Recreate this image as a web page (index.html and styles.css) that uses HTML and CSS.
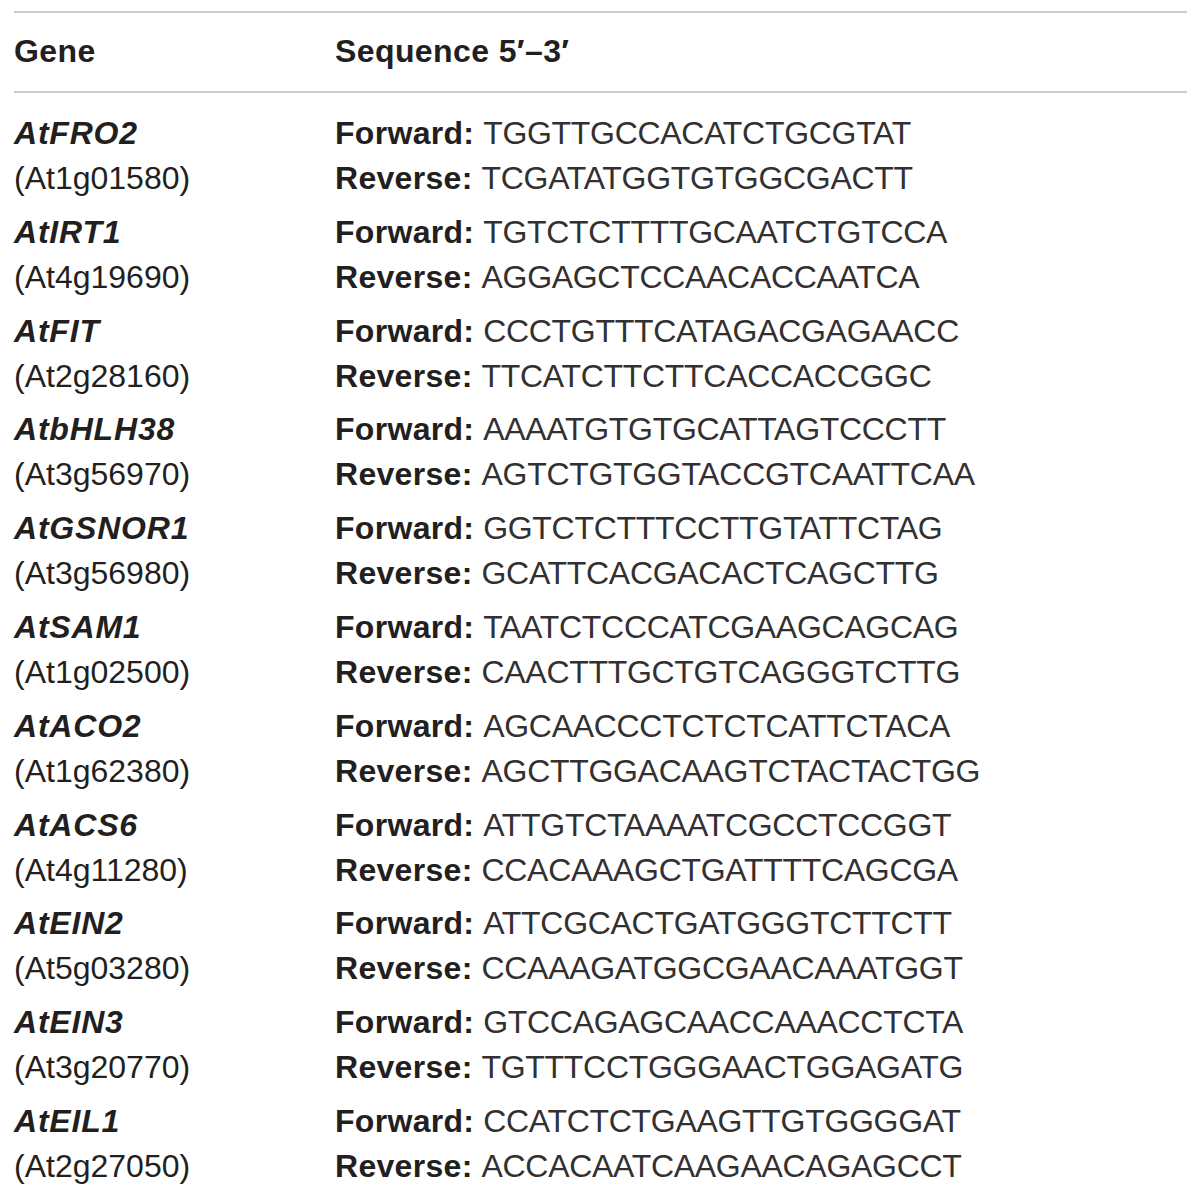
FILE: index.html
```html
<!DOCTYPE html>
<html lang="en">
<head>
<meta charset="utf-8">
<title>Primers</title>
<link rel="stylesheet" href="styles.css">
</head>
<body>
<div class="table">
  <div class="head">
    <div class="h-gene">Gene</div>
    <div class="h-seq">Sequence 5′–3′</div>
  </div>
  <div class="rows">
    <div class="row"><div class="gene"><div class="name">AtFRO2</div><div class="locus">(At1g01580)</div></div><div class="seq"><div><b>Forward:</b> <span>TGGTTGCCACATCTGCGTAT</span></div><div><b>Reverse:</b> <span>TCGATATGGTGTGGCGACTT</span></div></div></div>
    <div class="row"><div class="gene"><div class="name">AtIRT1</div><div class="locus">(At4g19690)</div></div><div class="seq"><div><b>Forward:</b> <span>TGTCTCTTTTGCAATCTGTCCA</span></div><div><b>Reverse:</b> <span>AGGAGCTCCAACACCAATCA</span></div></div></div>
    <div class="row"><div class="gene"><div class="name">AtFIT</div><div class="locus">(At2g28160)</div></div><div class="seq"><div><b>Forward:</b> <span>CCCTGTTTCATAGACGAGAACC</span></div><div><b>Reverse:</b> <span>TTCATCTTCTTCACCACCGGC</span></div></div></div>
    <div class="row"><div class="gene"><div class="name">AtbHLH38</div><div class="locus">(At3g56970)</div></div><div class="seq"><div><b>Forward:</b> <span>AAAATGTGTGCATTAGTCCCTT</span></div><div><b>Reverse:</b> <span>AGTCTGTGGTACCGTCAATTCAA</span></div></div></div>
    <div class="row"><div class="gene"><div class="name">AtGSNOR1</div><div class="locus">(At3g56980)</div></div><div class="seq"><div><b>Forward:</b> <span>GGTCTCTTTCCTTGTATTCTAG</span></div><div><b>Reverse:</b> <span>GCATTCACGACACTCAGCTTG</span></div></div></div>
    <div class="row"><div class="gene"><div class="name">AtSAM1</div><div class="locus">(At1g02500)</div></div><div class="seq"><div><b>Forward:</b> <span>TAATCTCCCATCGAAGCAGCAG</span></div><div><b>Reverse:</b> <span>CAACTTTGCTGTCAGGGTCTTG</span></div></div></div>
    <div class="row"><div class="gene"><div class="name">AtACO2</div><div class="locus">(At1g62380)</div></div><div class="seq"><div><b>Forward:</b> <span>AGCAACCCTCTCTCATTCTACA</span></div><div><b>Reverse:</b> <span>AGCTTGGACAAGTCTACTACTGG</span></div></div></div>
    <div class="row"><div class="gene"><div class="name">AtACS6</div><div class="locus">(At4g11280)</div></div><div class="seq"><div><b>Forward:</b> <span>ATTGTCTAAAATCGCCTCCGGT</span></div><div><b>Reverse:</b> <span>CCACAAAGCTGATTTTCAGCGA</span></div></div></div>
    <div class="row"><div class="gene"><div class="name">AtEIN2</div><div class="locus">(At5g03280)</div></div><div class="seq"><div><b>Forward:</b> <span>ATTCGCACTGATGGGTCTTCTT</span></div><div><b>Reverse:</b> <span>CCAAAGATGGCGAACAAATGGT</span></div></div></div>
    <div class="row"><div class="gene"><div class="name">AtEIN3</div><div class="locus">(At3g20770)</div></div><div class="seq"><div><b>Forward:</b> <span>GTCCAGAGCAACCAAACCTCTA</span></div><div><b>Reverse:</b> <span>TGTTTCCTGGGAACTGGAGATG</span></div></div></div>
    <div class="row"><div class="gene"><div class="name">AtEIL1</div><div class="locus">(At2g27050)</div></div><div class="seq"><div><b>Forward:</b> <span>CCATCTCTGAAGTTGTGGGGAT</span></div><div><b>Reverse:</b> <span>ACCACAATCAAGAACAGAGCCT</span></div></div></div>
  </div>
</div>
</body>
</html>
```
FILE: styles.css
```css
html, body {
  margin: 0;
  padding: 0;
  background: #ffffff;
}
body {
  font-family: "Liberation Sans", Arial, sans-serif;
  color: #231f20;
  font-size: 32px;
  line-height: 45px;
}
.table {
  margin: 11px 13px 0 14px;
  border-top: 2px solid #cbcbcb;
}
.head {
  display: grid;
  grid-template-columns: 321px 1fr;
  padding: 16px 0 17px;
  border-bottom: 2px solid #cbcbcb;
  font-weight: bold;
}
.h-gene, .h-seq {
  letter-spacing: 0.4px;
}
.rows {
  display: flex;
  flex-direction: column;
  gap: 8.8px;
  padding-top: 18px;
}
.row {
  display: grid;
  grid-template-columns: 321px 1fr;
}
.name {
  font-weight: bold;
  font-style: italic;
  letter-spacing: 0.8px;
}
.locus {
  letter-spacing: 0px;
}
.seq b {
  font-weight: bold;
  letter-spacing: 0.3px;
}
.seq span {
  letter-spacing: -0.3px;
  color: #333031;
}
```
